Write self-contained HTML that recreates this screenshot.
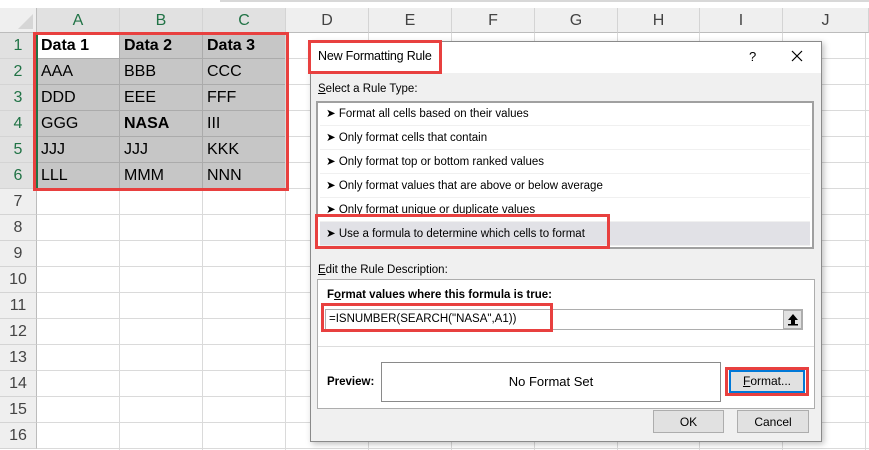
<!DOCTYPE html>
<html><head><meta charset="utf-8"><style>
*{margin:0;padding:0;box-sizing:border-box}
body{width:869px;height:450px;overflow:hidden;background:#fff;font-family:"Liberation Sans",sans-serif;position:relative}
.a{position:absolute}
.ch{position:absolute;top:8px;height:25px;background:#efefef;border-right:1px solid #d4d4d4;border-bottom:1px solid #bcbcbc;color:#444;font-size:16px;text-align:center;line-height:25px}
.rh{position:absolute;left:0;width:37px;height:26px;background:#efefef;border-bottom:1px solid #d4d4d4;border-right:1px solid #bcbcbc;color:#444;font-size:16px;text-align:center;line-height:26px}
.vl{position:absolute;top:33px;height:417px;width:1px;background:#dadada}
.hl{position:absolute;left:37px;width:832px;height:1px;background:#dadada}
.cell{position:absolute;font-size:16px;line-height:26px;padding-left:4px;color:#000}
.red{position:absolute;border:3px solid #e8403f}
.dt{font-size:12px;color:#000;position:absolute}
.item{position:absolute;left:320px;width:490px;height:24px;font-size:11.5px;line-height:24px;padding-left:6px;border-bottom:1px solid #f0f0f0}
.btn{position:absolute;background:#e1e1e1;border:1px solid #adadad;font-size:12px;text-align:center;line-height:22px}
</style></head><body>
<div class="a" style="left:220px;top:0;width:649px;height:2px;background:#d8d8d8"></div>
<div class="a" style="left:0;top:8px;width:37px;height:25px;background:#efefef;border-right:1px solid #bcbcbc;border-bottom:1px solid #bcbcbc"></div>
<svg class="a" style="left:16px;top:14px" width="18" height="16"><polygon points="17,0 17,15 2,15" fill="#d6d6d6"/></svg>
<div class="ch" style="left:37px;width:83px;color:#217346;background:#e1e1e1">A</div>
<div class="ch" style="left:120px;width:83px;color:#217346;background:#e1e1e1">B</div>
<div class="ch" style="left:203px;width:83px;color:#217346;background:#e1e1e1">C</div>
<div class="ch" style="left:286px;width:83px">D</div>
<div class="ch" style="left:369px;width:83px">E</div>
<div class="ch" style="left:452px;width:83px">F</div>
<div class="ch" style="left:535px;width:83px">G</div>
<div class="ch" style="left:618px;width:82px">H</div>
<div class="ch" style="left:700px;width:83px">I</div>
<div class="ch" style="left:783px;width:86px">J</div>
<div class="rh" style="top:33px;color:#217346;background:#e1e1e1">1</div>
<div class="rh" style="top:59px;color:#217346;background:#e1e1e1">2</div>
<div class="rh" style="top:85px;color:#217346;background:#e1e1e1">3</div>
<div class="rh" style="top:111px;color:#217346;background:#e1e1e1">4</div>
<div class="rh" style="top:137px;color:#217346;background:#e1e1e1">5</div>
<div class="rh" style="top:163px;color:#217346;background:#e1e1e1">6</div>
<div class="rh" style="top:189px">7</div>
<div class="rh" style="top:215px">8</div>
<div class="rh" style="top:241px">9</div>
<div class="rh" style="top:267px">10</div>
<div class="rh" style="top:293px">11</div>
<div class="rh" style="top:319px">12</div>
<div class="rh" style="top:345px">13</div>
<div class="rh" style="top:371px">14</div>
<div class="rh" style="top:397px">15</div>
<div class="rh" style="top:423px">16</div>
<div class="vl" style="left:119px"></div><div class="vl" style="left:202px"></div><div class="vl" style="left:285px"></div><div class="vl" style="left:368px"></div><div class="vl" style="left:451px"></div><div class="vl" style="left:534px"></div><div class="vl" style="left:617px"></div><div class="vl" style="left:699px"></div><div class="vl" style="left:782px"></div><div class="vl" style="left:865px"></div>
<div class="hl" style="top:58px"></div><div class="hl" style="top:84px"></div><div class="hl" style="top:110px"></div><div class="hl" style="top:136px"></div><div class="hl" style="top:162px"></div><div class="hl" style="top:188px"></div><div class="hl" style="top:214px"></div><div class="hl" style="top:240px"></div><div class="hl" style="top:266px"></div><div class="hl" style="top:292px"></div><div class="hl" style="top:318px"></div><div class="hl" style="top:344px"></div><div class="hl" style="top:370px"></div><div class="hl" style="top:396px"></div><div class="hl" style="top:422px"></div><div class="hl" style="top:448px"></div>
<div class="a" style="left:37px;top:33px;width:248px;height:155px;background:#c6c6c6"></div>
<div class="a" style="left:37px;top:33px;width:82px;height:25px;background:#fff"></div>
<div class="a" style="left:119px;top:33px;width:1px;height:155px;background:#ababab"></div>
<div class="a" style="left:202px;top:33px;width:1px;height:155px;background:#ababab"></div>
<div class="a" style="left:37px;top:84px;width:248px;height:1px;background:#ababab"></div>
<div class="a" style="left:37px;top:58px;width:248px;height:1px;background:#ababab"></div>
<div class="a" style="left:37px;top:110px;width:248px;height:1px;background:#ababab"></div>
<div class="a" style="left:37px;top:136px;width:248px;height:1px;background:#ababab"></div>
<div class="a" style="left:37px;top:162px;width:248px;height:1px;background:#ababab"></div>
<div class="a" style="left:36px;top:33px;width:2px;height:155px;background:#217346"></div>
<div class="cell" style="left:37px;top:33px;font-weight:bold">Data 1</div>
<div class="cell" style="left:120px;top:33px;font-weight:bold">Data 2</div>
<div class="cell" style="left:203px;top:33px;font-weight:bold">Data 3</div>
<div class="cell" style="left:37px;top:59px">AAA</div><div class="cell" style="left:120px;top:59px">BBB</div><div class="cell" style="left:203px;top:59px">CCC</div>
<div class="cell" style="left:37px;top:85px">DDD</div><div class="cell" style="left:120px;top:85px">EEE</div><div class="cell" style="left:203px;top:85px">FFF</div>
<div class="cell" style="left:37px;top:111px">GGG</div><div class="cell" style="left:120px;top:111px;font-weight:bold">NASA</div><div class="cell" style="left:203px;top:111px">III</div>
<div class="cell" style="left:37px;top:137px">JJJ</div><div class="cell" style="left:120px;top:137px">JJJ</div><div class="cell" style="left:203px;top:137px">KKK</div>
<div class="cell" style="left:37px;top:163px">LLL</div><div class="cell" style="left:120px;top:163px">MMM</div><div class="cell" style="left:203px;top:163px">NNN</div>
<div class="red" style="left:33px;top:32px;width:256px;height:159px"></div>

<!-- dialog -->
<div class="a" style="left:310px;top:41px;width:512px;height:401px;background:#f0f0f0;border:1px solid #8a8a8a;box-shadow:2px 2px 6px rgba(0,0,0,.25)"></div>
<div class="a" style="left:311px;top:42px;width:510px;height:31px;background:#fff"></div>
<div class="dt" style="left:318px;top:49px;font-size:12.5px;letter-spacing:-0.2px">New Formatting Rule</div>
<div class="dt" style="left:749px;top:49px;font-size:13px">?</div>
<svg class="a" style="left:791px;top:50px" width="12" height="12"><path d="M1 1L11 11M11 1L1 11" stroke="#000" stroke-width="1.2"/></svg>
<div class="red" style="left:308px;top:40px;width:134px;height:34px"></div>
<div class="dt" style="left:318px;top:83px;font-size:11.5px"><u>S</u>elect a Rule Type:</div>
<div class="a" style="left:316px;top:101px;width:498px;height:148px;background:#fff;border:2px solid #a0a0a0"></div>
<div class="item" style="top:102px">➤ Format all cells based on their values</div>
<div class="item" style="top:126px">➤ Only format cells that contain</div>
<div class="item" style="top:150px">➤ Only format top or bottom ranked values</div>
<div class="item" style="top:174px">➤ Only format values that are above or below average</div>
<div class="item" style="top:198px">➤ Only format unique or duplicate values</div>
<div class="item" style="top:222px;background:#e1e1e6">➤ Use a formula to determine which cells to format</div>
<div class="red" style="left:315px;top:214px;width:295px;height:35px"></div>
<div class="dt" style="left:318px;top:264px;font-size:11.5px"><u>E</u>dit the Rule Description:</div>
<div class="a" style="left:317px;top:279px;width:498px;height:130px;background:#fff;border:1px solid #adadad"></div>
<div class="dt" style="left:327px;top:289px;font-size:11.5px;font-weight:bold">F<u>o</u>rmat values where this formula is true:</div>
<div class="a" style="left:325px;top:309px;width:478px;height:21px;background:#fff;border:1px solid #adadad"></div>
<div class="dt" style="left:329px;top:313px;font-size:11.5px">=ISNUMBER(SEARCH("NASA",A1))</div>
<div class="a" style="left:783px;top:310px;width:19px;height:19px;background:#e1e1e1;border:1px solid #adadad"></div>
<svg class="a" style="left:787px;top:313px" width="12" height="13"><path d="M6 1L1 7H4V11H8V7H11Z" fill="#000"/><rect x="1" y="11" width="10" height="1.5" fill="#000"/></svg>
<div class="red" style="left:321px;top:303px;width:232px;height:29px"></div>
<div class="a" style="left:318px;top:346px;width:496px;height:1px;background:#ddd"></div>
<div class="dt" style="left:327px;top:376px;font-size:11.5px;font-weight:bold">Preview:</div>
<div class="a" style="left:381px;top:362px;width:340px;height:40px;background:#fff;border:1px solid #8a8a8a;font-size:13px;text-align:center;line-height:38px">No Format Set</div>
<div class="btn" style="left:729px;top:370px;width:76px;height:23px;border:2px solid #0078d7;line-height:19px"><u>F</u>ormat...</div>
<div class="red" style="left:725px;top:367px;width:84px;height:29px"></div>
<div class="btn" style="left:653px;top:410px;width:71px;height:23px">OK</div>
<div class="btn" style="left:737px;top:410px;width:72px;height:23px">Cancel</div>
</body></html>
